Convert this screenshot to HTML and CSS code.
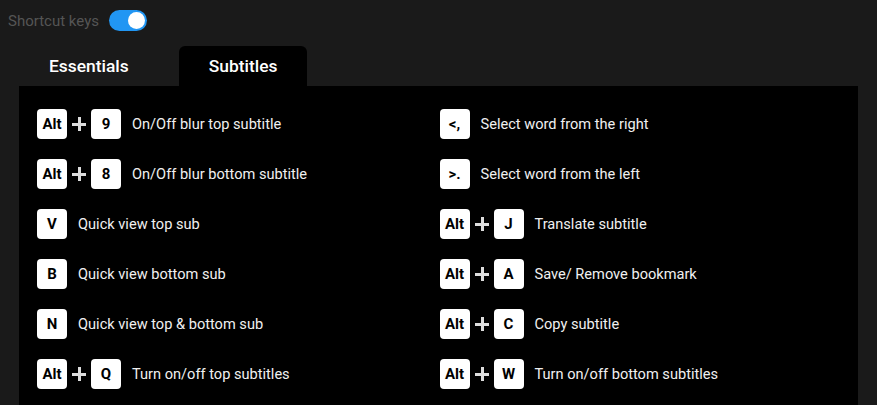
FILE: index.html
```html
<!DOCTYPE html>
<html>
<head>
<meta charset="utf-8">
<link rel="stylesheet" href="styles.css">
</head>
<body>
<div class="page">
  <div class="header">
    <span class="header-label">Shortcut keys</span>
    <span class="toggle"><span class="knob"></span></span>
  </div>
  <div class="tabs">
    <div class="tab">Essentials</div>
    <div class="tab active">Subtitles</div>
  </div>
  <div class="panel">
    <div class="row"><span class="key">Alt</span><span class="plus"></span><span class="key">9</span><span class="desc">On/Off blur top subtitle</span></div>
    <div class="row"><span class="key">&lt;,</span><span class="desc">Select word from the right</span></div>
    <div class="row"><span class="key">Alt</span><span class="plus"></span><span class="key">8</span><span class="desc">On/Off blur bottom subtitle</span></div>
    <div class="row"><span class="key">&gt;.</span><span class="desc">Select word from the left</span></div>
    <div class="row"><span class="key">V</span><span class="desc">Quick view top sub</span></div>
    <div class="row"><span class="key">Alt</span><span class="plus"></span><span class="key">J</span><span class="desc">Translate subtitle</span></div>
    <div class="row"><span class="key">B</span><span class="desc">Quick view bottom sub</span></div>
    <div class="row"><span class="key">Alt</span><span class="plus"></span><span class="key">A</span><span class="desc">Save/ Remove bookmark</span></div>
    <div class="row"><span class="key">N</span><span class="desc">Quick view top &amp; bottom sub</span></div>
    <div class="row"><span class="key">Alt</span><span class="plus"></span><span class="key">C</span><span class="desc">Copy subtitle</span></div>
    <div class="row"><span class="key">Alt</span><span class="plus"></span><span class="key">Q</span><span class="desc">Turn on/off top subtitles</span></div>
    <div class="row"><span class="key">Alt</span><span class="plus"></span><span class="key">W</span><span class="desc">Turn on/off bottom subtitles</span></div>
  </div>
</div>
</body>
</html>
```
FILE: styles.css
```css
html, body {
  margin: 0;
  padding: 0;
  background: #1a1a1a;
  font-family: Roboto, "Liberation Sans", sans-serif;
  overflow: hidden;
}
.page {
  width: 877px;
  height: 405px;
  overflow: hidden;
}
.header {
  display: flex;
  align-items: center;
  height: 21px;
  padding: 10px 0 0 8px;
}
.header-label {
  color: #555555;
  font-size: 15px;
  margin-right: 10px;
}
.toggle {
  width: 38px;
  height: 21px;
  border-radius: 11px;
  background: #2196f3;
  display: flex;
  align-items: center;
  justify-content: flex-end;
  padding-right: 2px;
  box-sizing: border-box;
}
.knob {
  width: 17px;
  height: 17px;
  border-radius: 50%;
  background: #ffffff;
}
.tabs {
  display: flex;
  gap: 20px;
  margin: 15px 0 0 19px;
}
.tab {
  height: 40px;
  padding: 0 30px;
  display: flex;
  align-items: center;
  color: #ffffff;
  font-size: 17.4px;
  font-weight: 500;
  border-radius: 6px 6px 0 0;
}
.tab.active {
  background: #000000;
}
.panel {
  margin-left: 19px;
  width: 839px;
  box-sizing: border-box;
  background: #000000;
  padding: 23px 16px 30px 18px;
  display: grid;
  grid-template-columns: 1fr 1fr;
  row-gap: 20px;
}
.row {
  display: flex;
  align-items: center;
  height: 30px;
}
.key {
  width: 30px;
  height: 30px;
  border-radius: 4px;
  background: #ffffff;
  color: #000000;
  font-weight: 700;
  font-size: 15px;
  display: flex;
  align-items: center;
  justify-content: center;
  flex: none;
}
.plus {
  position: relative;
  width: 14px;
  height: 14px;
  margin: 0 5px;
  flex: none;
}
.plus::before, .plus::after {
  content: "";
  position: absolute;
  background: #dddddd;
}
.plus::before {
  left: 0;
  right: 0;
  top: 6px;
  height: 3px;
}
.plus::after {
  top: 0;
  bottom: 0;
  left: 6px;
  width: 3px;
}
.desc {
  color: #f0f0f0;
  font-size: 14.6px;
  margin-left: 11px;
}
```
